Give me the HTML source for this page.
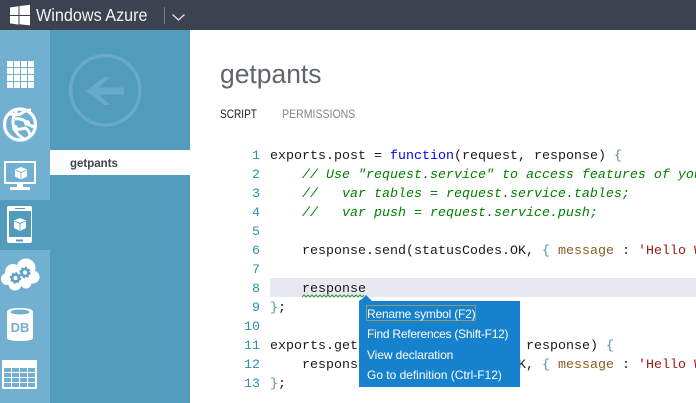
<!DOCTYPE html>
<html><head><meta charset="utf-8"><style>
html,body{margin:0;padding:0;background:#fff}
body{width:696px;height:403px;overflow:hidden;position:relative;font-family:"Liberation Sans",sans-serif}
.a{position:absolute}
.code{position:absolute;left:270px;font:13.33px/19px "Liberation Mono",monospace;color:#1a1a1a;white-space:pre}
.n{position:absolute;left:230px;width:30px;text-align:right;font:13.33px/19px "Liberation Mono",monospace;color:#2b91af}
.g{color:#008000;font-style:italic}.k{color:#0000ff}.s{color:#a31515}.m{color:#8a5a20}.b{color:#5b8fa8}
.menu{position:absolute;left:367px;color:#fff;font-size:12px;white-space:nowrap}
.sx{transform-origin:left center;white-space:nowrap}
</style></head><body>
<div class="a" style="left:0;top:0;width:696px;height:30px;background:#3c4250"></div>
<svg class="a" style="left:0;top:0" width="190" height="30">
<path d="M10 7.500l8.500-1.300V15H10zM19.500 6L30 4.800V15H19.500zM10 16h8.500v8.600L10 23.400zM19.500 16H30v9.400l-10.500-1.200z" fill="#fff"/>
<path d="M172.500 14.500l6 5.500 6-5.500" fill="none" stroke="#dfe2e6" stroke-width="1.300"/>
<rect x="164" y="7" width="1" height="17" fill="#767b86"/>
</svg>
<div class="a sx" style="left:36px;top:3px;font-size:17.500px;line-height:24px;color:#f2f3f4;transform:scaleX(.925)">Windows Azure</div>

<div class="a" style="left:0;top:30px;width:50px;height:373px;background:#72b0d2"></div>
<div class="a" style="left:50px;top:30px;width:140px;height:373px;background:#519bbd"></div>
<div class="a" style="left:0;top:200px;width:50px;height:50px;background:#519bbd"></div>
<div class="a" style="left:50px;top:150px;width:140px;height:25px;background:#fff"></div>
<div class="a" style="left:70px;top:156px;font-size:11.500px;line-height:16px;font-weight:bold;color:#3c4250">getpants</div>

<svg class="a" style="left:0;top:30px" width="190" height="373" viewBox="0 30 190 373">
<circle cx="105.300" cy="90.300" r="34.700" fill="none" stroke="#69a9cb" stroke-width="3.500"/>
<path d="M86 91L104 77H110L99 87.500H124V94.500H99L110 105H104Z" fill="#69a9cb"/>
<path fill="#fff" d="M7 61h6v6H7zM14 61h6v6h-6zM21 61h6v6h-6zM28 61h6v6h-6zM7 68h6v6H7zM14 68h6v6h-6zM21 68h6v6h-6zM28 68h6v6h-6zM7 75h6v6H7zM14 75h6v6h-6zM21 75h6v6h-6zM28 75h6v6h-6zM7 82h6v6H7zM14 82h6v6h-6zM21 82h6v6h-6zM28 82h6v6h-6z"/>
<g fill="none" stroke="#fff" stroke-width="3">
<circle cx="20" cy="124.500" r="15.500" stroke-width="3.200"/>
<path d="M8 113c5 2 10 3 14 0 3-2 6-3 9-3M17 111c-4 5-5 11-3 17 2 5 5 8 10 11M15 119c5-1 10 1 13 5 2 2 6 3 8 2M14 129c4 1 8 0 11-1 3 1 5 5 5 8"/>
</g>
<circle cx="27" cy="123" r="3" fill="#fff"/><circle cx="15" cy="128" r="3" fill="#fff"/>
<path d="M4 161h32v23H23v3h7v3H10v-3h7v-3H4zM6 163v19h28v-19z" fill="#fff" fill-rule="evenodd"/>
<path d="M21 167l6 2.500v7l-6 3-6-3v-7z" fill="#fff"/>
<path d="M15.500 170l5.500 2.500 5.500-2.500M21 172.500v6.500" stroke="#72b0d2" stroke-width=".8" fill="none"/>
<path d="M9 206h21a2 2 0 0 1 2 2v33a2 2 0 0 1-2 2H9a2 2 0 0 1-2-2v-33a2 2 0 0 1 2-2zM9 211v26h22v-26z" fill="#fff" fill-rule="evenodd"/>
<rect x="15" y="208" width="10" height="1" fill="#519bbd"/><rect x="16" y="239.500" width="7" height="2" fill="#519bbd"/>
<path d="M20 218l6 2.500v7.500l-6 3-6-3v-7.500z" fill="#fff"/>
<path d="M14.500 221l5.500 2.500 5.500-2.500M20 223.500v7" stroke="#519bbd" stroke-width=".8" fill="none"/>
<g fill="#fff"><circle cx="13" cy="272" r="8"/><circle cx="26" cy="268" r="9.500"/><circle cx="33" cy="277" r="6.500"/><circle cx="7" cy="279" r="6"/><circle cx="15" cy="284" r="6.500"/><circle cx="26" cy="283" r="5.500"/><rect x="8" y="272" width="24" height="10"/></g>
<circle cx="15.500" cy="278" r="3.500" fill="none" stroke="#5ba2c6" stroke-width="2.600"/>
<circle cx="25" cy="272.500" r="3.500" fill="none" stroke="#5ba2c6" stroke-width="2.600"/>
<circle cx="15.500" cy="278" r="5" fill="none" stroke="#5ba2c6" stroke-width="1.400" stroke-dasharray="2 1.900"/>
<circle cx="25" cy="272.500" r="5" fill="none" stroke="#5ba2c6" stroke-width="1.400" stroke-dasharray="2 1.900"/>
<path d="M7 312c0-3 6-4 13-4s13 1 13 4v26c0 2-6 3-13 3s-13-1-13-3z" fill="#fff"/>
<ellipse cx="20" cy="312" rx="9.500" ry="2.500" fill="#72b0d2"/>
<rect x="2" y="360" width="35" height="29" rx="1" fill="#fff"/>
<path fill="#72b0d2" d="M4 368h7v4H4zM12 368h7v4h-7zM20 368h7v4h-7zM28 368h7v4h-7zM4 373h7v4H4zM12 373h7v4h-7zM20 373h7v4h-7zM28 373h7v4h-7zM4 378h7v4H4zM12 378h7v4h-7zM20 378h7v4h-7zM28 378h7v4h-7zM4 383h7v4H4zM12 383h7v4h-7zM20 383h7v4h-7zM28 383h7v4h-7z"/>
</svg>
<div class="a" style="left:10px;top:320px;width:20px;text-align:center;font-size:13px;line-height:16px;font-weight:bold;color:#72b0d2">DB</div>

<div class="a sx" style="left:220px;top:56px;font-size:27px;line-height:36px;color:#60656c;transform:scaleX(.98)">getpants</div>
<div class="a sx" style="left:220px;top:106px;font-size:12px;line-height:16px;color:#1a1a1a;transform:scaleX(.84)">SCRIPT</div>
<div class="a sx" style="left:282px;top:106px;font-size:12px;line-height:16px;color:#7d8590;transform:scaleX(.88)">PERMISSIONS</div>

<div class="a" style="left:270px;top:278px;width:426px;height:19px;background:#e8e8f0"></div>

<div class="n" style="top:147px">1</div><div class="n" style="top:166px">2</div><div class="n" style="top:185px">3</div><div class="n" style="top:204px">4</div><div class="n" style="top:223px">5</div><div class="n" style="top:242px">6</div><div class="n" style="top:261px">7</div><div class="n" style="top:280px">8</div><div class="n" style="top:299px">9</div><div class="n" style="top:318px">10</div><div class="n" style="top:337px">11</div><div class="n" style="top:356px">12</div><div class="n" style="top:375px">13</div>

<div class="code" style="top:147px">exports.post = <span class="k">function</span>(request, response) <span class="b">{</span></div>
<div class="code g" style="top:166px">    // Use "request.service" to access features of your</div>
<div class="code g" style="top:185px">    //   var tables = request.service.tables;</div>
<div class="code g" style="top:204px">    //   var push = request.service.push;</div>
<div class="code" style="top:242px">    response.send(statusCodes.OK, <span class="b">{</span> <span class="m">message</span> : <span class="s">'Hello W</span></div>
<div class="code" style="top:280px">    response</div>
<div class="code" style="top:299px"><span class="b">}</span>;</div>
<div class="code" style="top:337px">exports.get = <span class="k">function</span>(request, response) <span class="b">{</span></div>
<div class="code" style="top:356px">    response.send(statusCodes.OK, <span class="b">{</span> <span class="m">message</span> : <span class="s">'Hello W</span></div>
<div class="code" style="top:375px"><span class="b">}</span>;</div>

<svg class="a" style="left:302px;top:294px" width="66" height="5"><path d="M0 3l2-2 2 2 2-2 2 2 2-2 2 2 2-2 2 2 2-2 2 2 2-2 2 2 2-2 2 2 2-2 2 2 2-2 2 2 2-2 2 2 2-2 2 2 2-2 2 2 2-2 2 2 2-2 2 2 2-2 2 2 2-2" fill="none" stroke="#3c9a3c" stroke-width="1"/></svg>

<svg class="a" style="left:359px;top:295px" width="14" height="7"><path d="M0 6h13L7 0 3 4z" fill="#1681cc"/></svg>
<div class="a" style="left:359px;top:301px;width:161px;height:86px;background:#1681cc"></div>
<div class="a" style="left:366px;top:305px;width:108px;height:14px;border:1px solid #8d9a72;border-radius:1px"></div>
<div class="menu" style="top:307px;letter-spacing:-.200px">Rename symbol (F2)</div>
<div class="menu" style="top:327px;letter-spacing:-.250px">Find References (Shift-F12)</div>
<div class="menu" style="top:348px;letter-spacing:-.100px">View declaration</div>
<div class="menu" style="top:368px;letter-spacing:-.020px">Go to definition (Ctrl-F12)</div>
</body></html>
